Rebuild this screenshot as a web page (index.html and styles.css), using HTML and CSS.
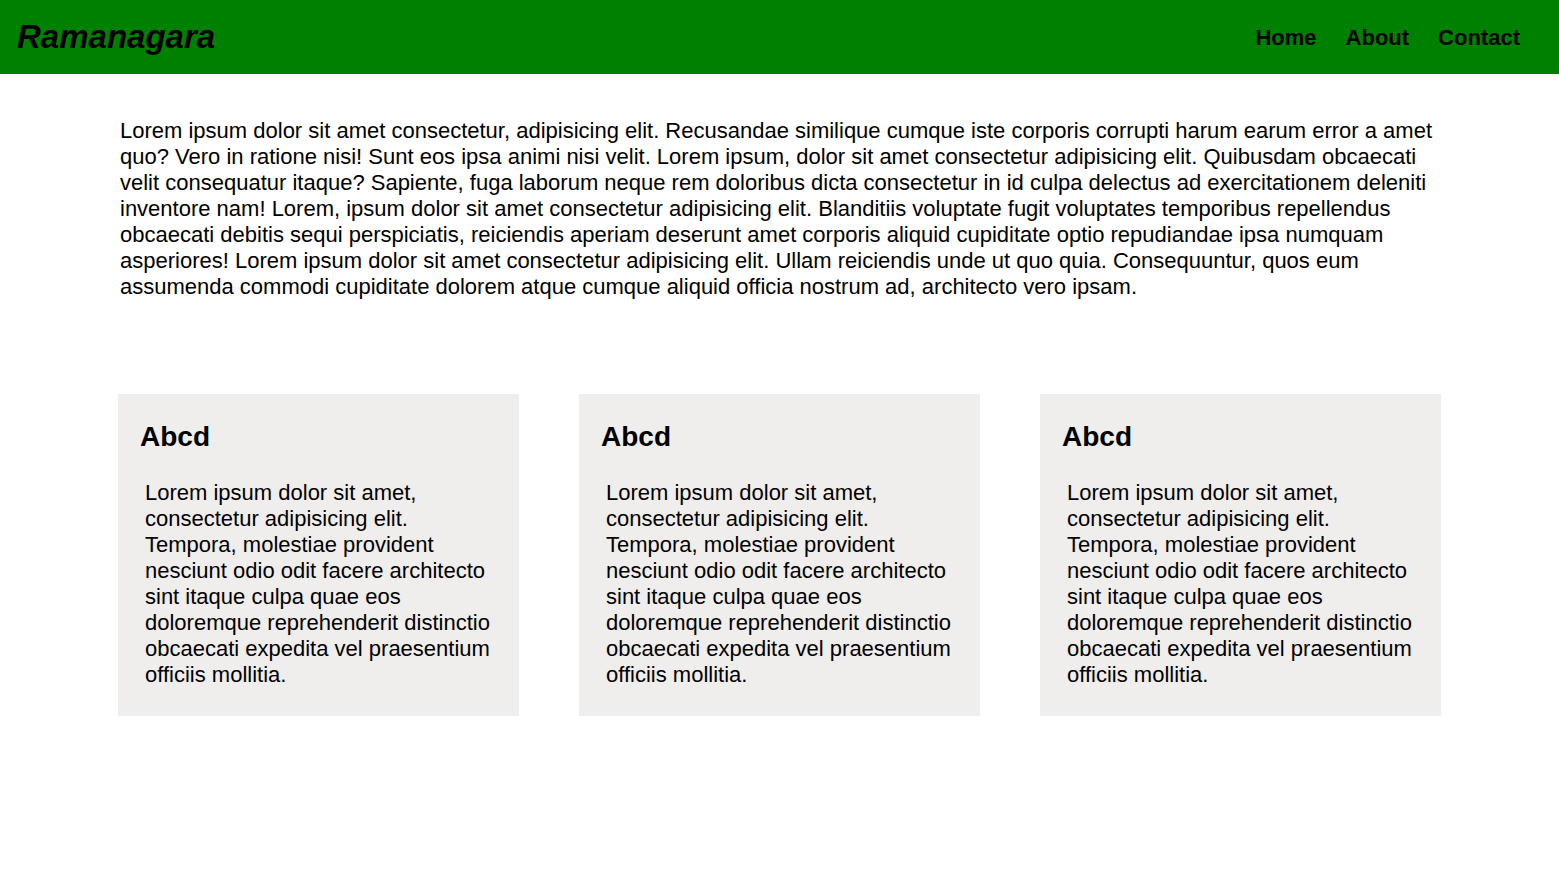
FILE: index.html
```html
<!DOCTYPE html>
<html lang="en">
<head>
<meta charset="utf-8">
<title>Ramanagara</title>
<link rel="stylesheet" href="styles.css">
</head>
<body>
<header class="site-header">
  <h1 class="brand">Ramanagara</h1>
  <nav class="nav">
    <a href="#" class="nav-link">Home</a>
    <a href="#" class="nav-link">About</a>
    <a href="#" class="nav-link">Contact</a>
  </nav>
</header>
<main class="content">
  <p class="intro">Lorem ipsum dolor sit amet consectetur, adipisicing elit. Recusandae similique cumque iste corporis corrupti harum earum error a amet quo? Vero in ratione nisi! Sunt eos ipsa animi nisi velit. Lorem ipsum, dolor sit amet consectetur adipisicing elit. Quibusdam obcaecati velit consequatur itaque? Sapiente, fuga laborum neque rem doloribus dicta consectetur in id culpa delectus ad exercitationem deleniti inventore nam! Lorem, ipsum dolor sit amet consectetur adipisicing elit. Blanditiis voluptate fugit voluptates temporibus repellendus obcaecati debitis sequi perspiciatis, reiciendis aperiam deserunt amet corporis aliquid cupiditate optio repudiandae ipsa numquam asperiores! Lorem ipsum dolor sit amet consectetur adipisicing elit. Ullam reiciendis unde ut quo quia. Consequuntur, quos eum assumenda commodi cupiditate dolorem atque cumque aliquid officia nostrum ad, architecto vero ipsam.</p>
  <section class="cards">
    <article class="card">
      <h2 class="card-title">Abcd</h2>
      <p class="card-text">Lorem ipsum dolor sit amet, consectetur adipisicing elit. Tempora, molestiae provident nesciunt odio odit facere architecto sint itaque culpa quae eos doloremque reprehenderit distinctio obcaecati expedita vel praesentium officiis mollitia.</p>
    </article>
    <article class="card">
      <h2 class="card-title">Abcd</h2>
      <p class="card-text">Lorem ipsum dolor sit amet, consectetur adipisicing elit. Tempora, molestiae provident nesciunt odio odit facere architecto sint itaque culpa quae eos doloremque reprehenderit distinctio obcaecati expedita vel praesentium officiis mollitia.</p>
    </article>
    <article class="card">
      <h2 class="card-title">Abcd</h2>
      <p class="card-text">Lorem ipsum dolor sit amet, consectetur adipisicing elit. Tempora, molestiae provident nesciunt odio odit facere architecto sint itaque culpa quae eos doloremque reprehenderit distinctio obcaecati expedita vel praesentium officiis mollitia.</p>
    </article>
  </section>
</main>
</body>
</html>
```
FILE: styles.css
```css
* { box-sizing: border-box; }
body {
  margin: 0;
  font-family: "Liberation Sans", Arial, sans-serif;
  color: #000;
  background: #fff;
}
.site-header {
  height: 74px;
  background: #008000;
  display: flex;
  align-items: center;
  justify-content: space-between;
  padding: 0 39px 0 17px;
}
.brand {
  margin: 0;
  font-size: 33px;
  font-style: italic;
  font-weight: bold;
}
.nav {
  display: flex;
  gap: 29px;
  margin-top: 2px;
}
.nav-link {
  color: #000;
  text-decoration: none;
  font-weight: bold;
  font-size: 22px;
}
.content {
  width: 1323px;
  margin: 0 auto;
}
.intro {
  margin: 44px 2px 0;
  font-size: 22px;
  line-height: 26px;
}
.cards {
  margin-top: 94px;
  display: grid;
  grid-template-columns: repeat(3, 1fr);
  gap: 60px;
}
.card {
  background: #f0eded;
  padding: 27px 22px 28px;
}
.card-title {
  margin: 0 0 27px;
  font-size: 28px;
  line-height: 32px;
  font-weight: bold;
}
.card-text {
  margin: 0 5px;
  font-size: 22px;
  line-height: 26px;
}
```
